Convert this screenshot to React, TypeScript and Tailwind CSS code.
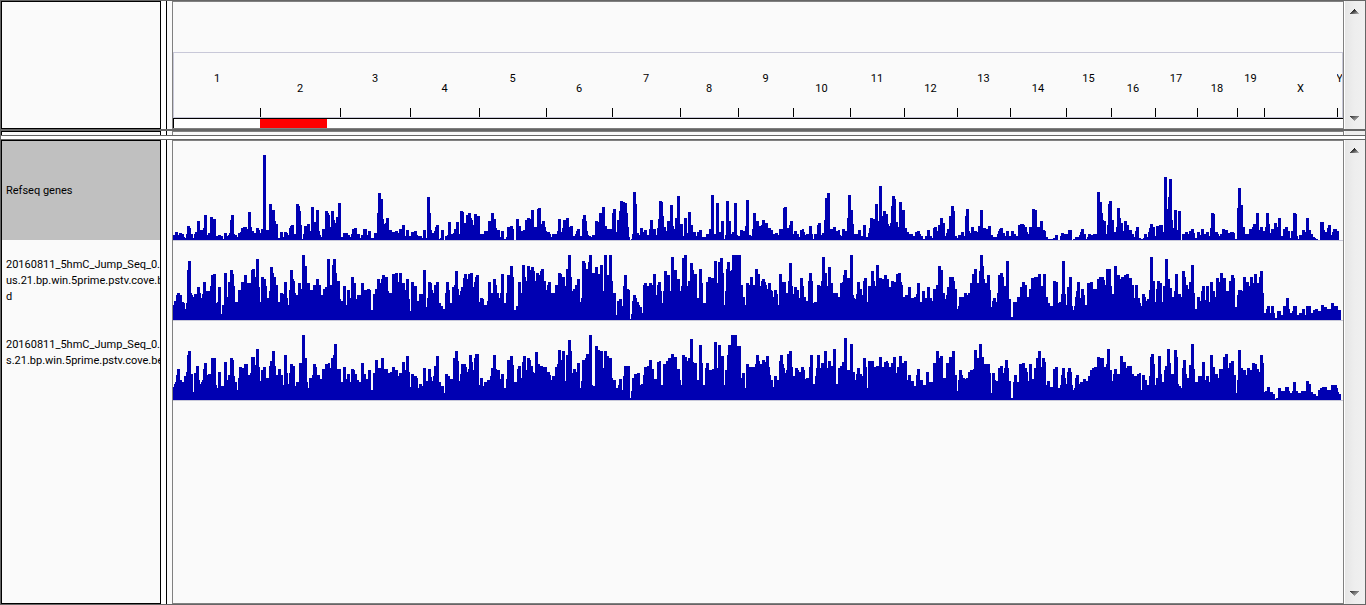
import React from "react";

const REFSEQ = `0:5 2:8 5:5 6:7 9:6 11:3 12:2 13:6 14:14 17:12 18:6 20:2 21:6 22:8 24:19 27:10 30:12 31:25 34:5 35:7 37:23 40:21 43:4 45:5 48:4 50:1 51:7 54:4 55:5 56:7 57:20 58:25 61:6 62:5 64:3 65:7 67:8 68:12 70:13 74:11 75:28 78:13 79:9 81:7 83:12 86:10 87:7 88:11 90:85 93:10 96:36 99:30 102:19 103:16 105:2 107:8 110:3 111:8 114:7 115:5 116:12 117:14 118:15 121:6 123:36 126:34 127:29 128:15 129:1 130:6 131:14 134:16 137:9 138:33 141:18 143:30 146:9 147:5 148:3 149:11 152:29 155:27 156:25 157:13 158:29 161:20 162:17 163:23 165:37 168:3 170:7 175:5 177:3 178:6 179:11 181:12 184:6 187:2 188:5 190:11 194:5 195:9 198:2 201:7 204:27 205:47 208:41 210:21 211:16 212:17 213:22 216:10 219:8 222:9 225:7 226:11 229:15 232:4 233:10 236:4 238:8 241:9 244:5 245:4 249:2 250:10 253:2 254:43 257:27 258:10 259:7 261:9 262:13 263:15 266:1 267:2 268:10 271:0 272:4 274:5 275:18 278:6 280:7 281:11 283:18 286:6 287:29 290:28 291:17 293:25 295:27 298:22 299:20 300:15 301:26 304:24 307:6 311:9 315:19 318:27 321:21 323:12 324:10 327:3 328:9 331:1 333:3 334:13 337:14 340:11 341:0 343:21 346:14 348:9 350:10 352:20 354:22 357:21 358:30 361:13 364:31 365:32 368:16 369:19 372:13 373:9 374:8 377:6 378:3 379:6 384:9 385:21 388:8 389:12 390:20 393:22 396:13 397:14 400:4 402:6 403:9 404:11 407:4 409:21 410:25 413:19 414:9 415:5 416:4 418:3 419:5 422:19 425:18 426:27 429:33 432:14 434:11 439:27 440:31 443:8 444:20 446:29 447:39 450:38 452:37 454:27 455:13 456:3 457:0 458:1 459:6 460:48 463:36 464:7 466:5 467:12 470:8 471:10 474:5 476:11 477:20 480:11 483:5 484:12 485:21 486:39 489:38 490:24 491:13 493:9 494:19 497:35 500:14 501:11 502:22 504:44 507:16 510:4 511:22 514:7 515:28 518:15 520:8 523:4 524:8 526:10 529:3 533:6 536:11 538:45 541:6 543:37 546:8 548:19 551:1 552:5 553:39 556:19 558:6 559:8 561:37 564:5 565:4 567:10 570:9 572:14 573:40 576:5 578:4 579:11 580:27 583:19 586:14 588:15 589:20 592:17 595:12 598:10 600:6 602:7 605:5 606:11 610:32 611:33 614:12 616:15 617:19 620:6 621:9 624:6 626:3 627:10 629:11 631:8 632:5 633:6 636:14 639:6 640:1 641:6 644:15 645:17 648:5 649:7 651:20 652:42 654:47 657:11 660:13 663:9 665:10 667:5 668:4 669:11 672:9 674:22 675:45 678:30 680:16 681:6 685:10 688:4 690:15 693:3 695:7 696:12 697:22 700:21 702:36 705:19 706:54 709:24 710:29 713:26 715:16 716:14 717:17 718:34 719:44 722:41 723:18 725:13 726:38 729:30 732:12 734:8 736:6 740:4 742:8 744:9 747:6 748:4 750:1 752:4 754:10 757:4 759:2 760:12 761:13 764:9 765:15 767:22 770:17 772:4 773:7 774:11 776:24 778:34 781:29 782:4 784:2 785:5 788:8 791:4 792:24 793:31 796:9 797:7 798:13 801:9 804:8 805:14 807:30 810:12 813:11 815:14 818:5 820:3 824:6 825:9 826:11 827:12 830:7 832:4 833:9 836:4 838:9 841:6 843:4 845:15 847:16 851:15 852:13 854:8 855:6 856:13 859:31 862:30 864:13 867:19 870:10 872:9 873:3 875:1 880:2 882:5 885:0 887:4 888:7 891:6 895:10 899:0 900:1 902:3 906:5 907:8 908:11 911:6 913:1 914:3 915:6 918:5 920:6 924:48 927:38 929:27 930:20 931:19 933:6 934:15 935:36 936:39 939:20 941:8 943:13 944:32 947:22 948:17 950:9 951:19 954:15 956:10 959:6 961:3 962:9 963:13 966:2 968:1 970:2 971:6 974:3 975:8 976:12 977:16 980:13 982:4 983:14 986:15 990:8 991:63 994:31 995:43 996:61 999:20 1000:12 1001:30 1004:10 1005:29 1008:0 1009:6 1012:8 1015:6 1016:9 1018:11 1021:7 1022:2 1024:8 1027:5 1028:11 1031:6 1033:8 1036:4 1037:12 1038:27 1041:26 1042:8 1045:6 1046:4 1047:6 1049:11 1052:10 1055:7 1057:8 1061:7 1062:1 1064:32 1065:52 1068:35 1070:13 1072:6 1076:11 1079:13 1080:16 1083:27 1086:10 1087:13 1090:9 1092:13 1093:27 1096:16 1097:7 1098:11 1101:17 1104:13 1105:22 1108:4 1110:11 1112:13 1115:9 1117:2 1118:9 1120:27 1123:26 1124:4 1125:1 1126:5 1129:10 1132:8 1133:22 1136:10 1138:6 1140:3 1142:2 1143:1 1145:0 1147:18 1151:10 1152:8 1154:12 1155:15 1158:5 1159:8 1160:11 1164:9 1166:0`;

const JUMP_A = `0:15 1:19 3:25 4:27 7:25 9:18 11:17 12:11 13:17 14:50 15:59 18:27 19:25 20:23 21:26 24:33 27:27 28:22 29:26 30:38 33:29 37:34 38:45 40:46 43:17 44:18 45:33 48:6 49:15 51:47 54:23 55:38 57:50 60:46 61:34 62:18 65:30 68:38 71:45 74:37 78:50 79:51 82:43 83:61 86:33 87:18 88:43 91:41 93:34 94:22 96:29 97:53 100:47 101:43 103:35 105:18 107:27 110:26 111:38 114:22 115:15 116:30 117:50 120:41 121:39 122:27 123:25 125:37 128:31 129:65 132:54 134:37 137:30 140:35 143:41 146:35 148:25 150:31 152:33 154:61 157:35 159:55 160:61 163:47 164:39 167:21 168:19 170:34 173:15 174:30 177:22 178:43 181:37 183:21 184:25 188:37 191:30 194:31 197:30 198:10 200:26 202:31 204:41 207:37 208:41 209:45 212:43 215:29 216:27 219:46 222:47 225:38 226:47 229:37 232:30 233:41 236:21 237:9 238:38 241:34 244:19 246:26 250:50 253:13 254:22 255:38 258:37 259:30 260:27 261:35 263:38 266:17 268:14 270:11 272:27 273:38 276:30 277:17 279:33 281:35 282:49 285:31 286:25 287:29 288:33 290:42 291:46 294:41 295:46 297:47 300:33 301:38 302:43 303:45 306:18 307:22 310:21 311:15 314:19 315:38 318:27 320:41 323:35 324:27 326:22 327:27 328:46 331:17 333:27 334:45 337:54 340:43 341:10 343:14 345:38 348:27 349:55 352:43 353:39 354:54 357:50 358:53 361:49 362:39 363:47 366:45 367:49 368:51 371:39 373:30 374:35 375:38 378:27 382:35 385:47 388:46 389:43 392:34 393:51 395:65 398:43 399:29 400:31 402:35 404:41 407:18 408:22 409:59 412:57 413:51 415:58 416:65 419:47 422:53 425:46 427:55 430:29 431:65 434:45 436:65 439:39 440:27 443:5 444:19 446:21 449:14 450:34 451:45 454:31 456:30 457:1 458:6 459:19 460:25 463:22 464:18 466:15 467:13 469:7 470:35 471:37 474:34 476:37 479:35 480:46 483:25 484:35 485:38 488:29 489:17 490:29 491:49 494:45 497:29 498:63 501:50 504:41 507:29 508:34 509:62 511:65 514:34 515:39 517:57 520:50 521:46 524:22 526:51 529:37 530:17 533:38 535:43 538:42 541:59 544:37 545:58 547:62 550:47 551:15 552:29 553:51 554:58 557:49 558:50 559:65 568:35 570:23 572:15 573:37 576:35 577:43 580:35 582:51 585:46 587:34 588:39 589:41 592:38 593:35 594:31 595:37 598:30 599:29 600:23 601:30 604:26 605:15 606:46 609:38 613:27 615:39 616:57 619:34 620:26 621:33 624:30 626:22 627:42 630:34 631:23 633:19 635:39 636:47 639:39 640:17 641:18 644:35 647:34 648:39 649:63 652:47 654:34 655:53 658:37 660:27 665:23 667:37 669:38 670:45 671:50 674:42 677:65 680:25 681:22 682:21 683:26 684:38 687:31 689:25 690:39 691:42 694:18 695:34 698:49 701:39 702:34 703:55 706:42 709:41 711:45 714:41 716:33 718:39 721:38 723:46 725:47 728:38 729:35 730:23 732:25 735:33 738:22 741:23 743:26 744:37 747:18 749:29 752:22 754:33 757:22 759:19 760:31 763:35 765:54 768:50 770:27 772:21 773:25 774:33 776:43 781:39 782:31 784:11 785:14 786:23 791:27 794:25 795:27 797:37 799:46 801:51 804:37 806:49 807:65 810:54 811:41 812:37 814:45 817:30 818:13 819:19 820:22 823:18 824:27 825:45 827:47 830:43 831:34 833:59 836:21 838:3 840:18 844:23 847:33 849:38 852:35 854:23 856:31 858:42 861:43 865:46 868:34 870:46 873:23 875:17 877:14 880:39 883:38 885:17 886:18 888:26 889:59 892:26 893:15 894:33 896:43 899:14 900:10 901:14 902:23 903:29 904:38 907:22 908:31 911:25 912:15 914:37 917:38 920:31 924:41 926:43 931:40 932:35 933:51 938:34 939:26 941:54 944:45 947:41 948:43 951:45 953:46 956:42 959:35 961:22 962:35 965:22 967:17 968:14 969:26 972:23 973:19 974:21 976:30 977:63 980:39 982:18 983:31 984:39 987:37 989:18 990:34 992:61 995:41 997:32 999:23 1001:29 1002:46 1005:26 1008:23 1009:49 1012:43 1013:35 1015:31 1016:38 1018:55 1021:27 1022:11 1024:23 1027:19 1028:29 1029:34 1032:20 1033:34 1036:18 1037:38 1040:29 1042:23 1043:42 1046:38 1047:47 1050:42 1053:29 1056:39 1058:45 1061:42 1062:13 1064:25 1065:30 1069:29 1070:43 1073:38 1076:34 1077:43 1080:37 1081:46 1084:37 1086:43 1087:49 1090:27 1091:7 1093:11 1094:14 1097:7 1098:14 1101:7 1102:2 1104:9 1108:5 1110:14 1113:22 1116:11 1117:7 1119:9 1120:14 1124:5 1126:7 1129:11 1132:5 1133:14 1138:7 1140:10 1142:11 1145:9 1148:15 1151:13 1154:11 1158:17 1161:14 1165:10 1168:0`;

const JUMP_B = `0:13 1:16 2:18 3:25 4:31 7:20 9:18 11:24 13:28 14:45 15:49 18:26 20:8 21:27 23:34 26:20 27:16 28:18 29:20 30:31 31:37 34:25 35:26 38:42 43:15 44:12 45:28 48:14 51:38 54:20 55:25 57:42 60:40 61:24 62:18 64:10 65:22 66:33 69:32 71:36 75:25 77:27 78:43 82:35 83:51 86:33 87:19 88:30 90:33 93:22 96:34 97:39 99:49 102:34 103:25 105:31 108:25 110:15 111:45 114:27 115:16 116:27 117:36 120:34 122:14 123:18 126:37 129:65 132:42 134:18 135:12 136:22 139:25 140:36 143:33 144:25 147:21 149:31 152:36 155:37 157:32 158:42 160:45 161:56 164:31 168:18 170:33 173:21 174:26 177:18 178:31 181:30 182:26 184:20 186:18 188:37 191:26 193:21 195:30 198:10 200:27 202:40 205:32 208:42 211:31 215:27 217:28 219:33 222:30 225:24 226:27 229:38 232:30 233:44 236:28 237:13 238:26 241:24 244:22 245:12 246:16 249:14 250:32 253:19 255:31 258:23 259:19 260:24 261:34 263:44 266:18 268:14 271:7 272:26 275:24 277:21 280:42 282:49 285:39 286:19 287:26 288:36 293:33 294:28 295:31 296:45 299:38 300:30 301:42 302:46 306:15 307:22 310:14 311:18 314:20 317:24 318:32 320:45 323:31 324:30 327:21 328:26 331:12 333:21 334:40 337:44 340:35 341:18 344:31 345:34 348:22 349:38 350:44 353:30 354:42 357:40 358:34 360:28 361:27 362:48 365:36 367:34 370:33 374:28 377:25 378:20 379:24 382:33 384:36 385:50 388:40 389:49 392:19 393:45 395:60 398:49 399:27 400:31 403:28 404:37 407:12 408:19 409:40 412:42 413:46 416:65 419:15 420:14 422:54 425:50 427:49 430:32 431:49 434:44 436:42 439:22 440:20 443:12 445:15 446:21 449:10 450:24 451:34 457:2 458:9 459:22 461:26 464:27 467:15 468:16 470:25 471:33 474:34 476:40 479:31 481:21 484:38 486:39 488:15 490:36 493:39 495:42 498:46 501:43 504:31 507:20 508:15 509:45 512:43 514:39 515:42 517:61 520:38 521:37 524:20 526:55 529:37 530:15 532:32 533:37 536:30 539:31 541:58 544:32 545:55 548:44 551:15 552:30 554:45 555:55 558:65 564:54 568:22 569:27 572:12 573:36 576:33 582:36 583:45 586:39 587:36 589:40 592:38 593:44 596:33 597:25 598:20 600:13 601:24 604:20 606:39 607:45 610:36 611:32 612:27 613:30 614:46 616:49 619:33 620:24 622:32 625:30 626:28 628:33 631:30 632:21 633:22 636:33 637:45 640:16 642:24 643:32 644:45 647:32 648:37 651:49 654:32 655:39 658:34 660:51 663:16 665:32 667:34 669:38 671:62 674:30 677:56 680:28 682:20 683:26 684:32 687:26 689:24 690:42 693:33 694:12 695:39 701:33 703:34 706:43 709:33 711:38 713:39 715:37 716:33 718:37 720:43 723:27 724:33 726:44 729:37 731:39 734:20 735:25 738:19 741:14 743:25 744:31 747:20 750:15 753:28 756:18 760:37 763:49 766:42 767:44 770:22 773:37 776:43 779:49 782:25 784:9 785:20 786:30 789:25 790:22 792:21 793:22 795:28 797:30 800:31 801:50 804:42 806:56 809:43 811:36 817:27 818:7 819:27 822:20 823:19 825:32 827:34 830:27 831:32 832:40 835:32 836:19 838:2 840:18 841:25 844:18 846:36 849:37 852:32 854:28 855:19 856:36 859:21 861:32 863:42 865:49 868:33 869:42 872:38 873:15 874:19 877:13 880:31 882:33 885:12 887:15 888:25 889:32 892:22 893:16 894:28 895:32 898:28 899:15 900:10 901:12 902:22 903:25 906:16 907:18 910:21 913:19 915:24 917:30 919:32 921:33 924:43 927:42 931:33 933:36 934:51 937:30 939:19 940:26 941:31 944:26 947:44 950:38 953:32 954:34 959:26 961:24 964:26 966:27 968:10 969:25 972:20 974:15 976:24 977:43 978:46 981:36 982:15 983:22 985:44 988:26 989:18 991:30 992:34 994:51 997:37 998:26 1001:50 1004:43 1005:16 1006:14 1008:12 1009:32 1010:40 1013:26 1014:22 1016:35 1018:56 1021:31 1022:18 1025:24 1029:38 1032:20 1033:24 1036:18 1037:45 1040:33 1042:26 1045:22 1046:31 1050:43 1052:46 1055:32 1056:37 1058:39 1061:25 1063:7 1064:20 1065:50 1068:32 1070:30 1073:25 1074:32 1077:30 1079:37 1082:36 1084:31 1086:28 1087:45 1090:37 1091:8 1092:9 1094:13 1097:8 1100:6 1102:1 1103:2 1105:12 1108:9 1112:13 1116:9 1117:7 1119:9 1120:18 1123:9 1125:7 1128:9 1133:19 1136:16 1138:8 1140:6 1143:4 1145:10 1147:12 1149:13 1154:10 1158:15 1164:12 1165:8 1166:6 1168:0`;

const CHROMOSOMES: [string, number][] = [
  ["1", 86], ["2", 80], ["3", 70], ["4", 69], ["5", 67], ["6", 66], ["7", 68],
  ["8", 58], ["9", 55], ["10", 57], ["11", 54], ["12", 53], ["13", 53],
  ["14", 56], ["15", 45], ["16", 44], ["17", 42], ["18", 40], ["19", 27],
  ["X", 73], ["Y", 5],
];

/** Turns "x:height" steps into a filled step outline standing on the baseline. */
function stepPath(data: string, height: number) {
  const steps = data.split(" ").map((s) => s.split(":").map(Number));
  let d = `M0 ${height}`;
  for (const [x, h] of steps) d += `H${x}V${height - h}`;
  return d + `V${height}Z`;
}

function Coverage({ data, height, name }: { data: string; height: number; name: string }) {
  return (
    <div className="border-b border-[#c8c8d8]">
      <svg
        role="img"
        aria-label={name}
        viewBox={`0 0 1170 ${height}`}
        preserveAspectRatio="none"
        shapeRendering="crispEdges"
        className={height > 90 ? "block h-[99px] w-full" : "block h-[79px] w-full"}
      >
        <path d={stepPath(data, height)} fill="#0000b2" />
      </svg>
    </div>
  );
}

function ScrollBar({ id }: { id: string }) {
  return (
    <div className="ml-px flex w-5 shrink-0 flex-col justify-between bg-linear-to-r from-[#e6e6e6] via-[#eeeeee] to-[#f0f0f0]">
      <button type="button" aria-label="Scroll up" className="flex h-5 items-center justify-center pr-px">
        <svg width="9" height="5" viewBox="0 0 9 5" shapeRendering="crispEdges">
          <defs>
            <linearGradient id={`${id}-up`} x1="0" y1="0" x2="1" y2="1">
              <stop offset="0.3" stopColor="#1c1c1c" />
              <stop offset="1" stopColor="#c4c4c4" />
            </linearGradient>
          </defs>
          <path d="M4 0H5V1H6V2H7V3H8V4H9V5H0V4H1V3H2V2H3V1H4Z" fill={`url(#${id}-up)`} />
        </svg>
      </button>
      <button type="button" aria-label="Scroll down" className="flex h-[22px] items-center justify-center pr-px">
        <svg width="9" height="5" viewBox="0 0 9 5" shapeRendering="crispEdges">
          <defs>
            <linearGradient id={`${id}-down`} x1="0" y1="0" x2="1" y2="1">
              <stop offset="0" stopColor="#2c2c2c" />
              <stop offset="0.9" stopColor="#c4c4c4" />
            </linearGradient>
          </defs>
          <path d="M0 0H9V1H8V2H7V3H6V4H5V5H4V4H3V3H2V2H1V1H0Z" fill={`url(#${id}-down)`} />
        </svg>
      </button>
    </div>
  );
}

function Gutter() {
  return (
    <div className="flex w-[11px] shrink-0">
      <div className="w-[5px] bg-white" />
      <div className="w-px bg-black" />
      <div className="flex-1 bg-[#fafafa]" />
    </div>
  );
}

function Ruler() {
  return (
    <div className="flex h-[66px] overflow-hidden border border-[#c8c8d8]">
      {CHROMOSOMES.map(([name, size], i) => (
        <div key={name} className="flex min-w-0 basis-0 flex-col overflow-hidden" style={{ flexGrow: size }}>
          <div className={i % 2 ? "flex justify-center pt-7" : "flex justify-center pt-[18px]"}>
            <span>{name}</span>
          </div>
          {i > 0 && <div className="mt-auto h-[9px] w-px bg-black" />}
        </div>
      ))}
    </div>
  );
}

export default function App() {
  return (
    <div
      className="flex h-screen flex-col overflow-hidden border border-[#666666] bg-white text-[11px] leading-4 text-black"
      style={{ fontFamily: 'Roboto, "DejaVu Sans", sans-serif' }}
    >
      <header className="flex h-32 shrink-0">
        <div className="w-40 shrink-0 border border-black bg-[#fafafa]" />
        <Gutter />
        <div className="flex min-w-0 flex-1 flex-col border border-[#808080] bg-[#fafafa]">
          <div className="flex-1" />
          <Ruler />
          <div className="flex h-[10px] border-t border-l border-black bg-white">
            <div className="basis-0 grow-[86]" />
            <div className="basis-0 grow-[67] bg-[#ff0000]" />
            <div className="basis-0 grow-[1016]" />
          </div>
        </div>
        <ScrollBar id="header" />
      </header>

      <div className="h-[2px] shrink-0 bg-[#666666]" />
      <div className="flex h-1 shrink-0">
        <div className="w-40 shrink-0 border-x border-t border-black bg-[#fafafa]" />
        <Gutter />
        <div className="flex-1 border-x border-t border-[#808080] bg-[#fafafa]" />
        <div className="ml-px w-5 bg-[#eeeeee]" />
      </div>
      <div className="h-[5px] shrink-0 border-y border-[#666666] bg-white" />

      <main className="flex min-h-0 flex-1">
        <div className="w-40 shrink-0 overflow-hidden border border-black bg-[#fafafa] whitespace-nowrap">
          <div className="mb-px flex h-[99px] items-center bg-[#c0c0c0] pl-1">Refseq genes</div>
          <div className="h-20 pt-4 pl-1">
            20160811_5hmC_Jump_Seq_0.
            <br />
            us.21.bp.win.5prime.pstv.cove.be
            <br />d
          </div>
          <div className="h-20 pt-4 pl-1">
            20160811_5hmC_Jump_Seq_0.
            <br />
            s.21.bp.win.5prime.pstv.cove.bed
          </div>
        </div>
        <Gutter />
        <div className="min-w-0 flex-1 border border-[#808080] bg-[#fafafa]">
          <Coverage data={REFSEQ} height={99} name="Refseq genes" />
          <Coverage data={JUMP_A} height={79} name="5hmC Jump Seq, first sample" />
          <Coverage data={JUMP_B} height={79} name="5hmC Jump Seq, second sample" />
        </div>
        <ScrollBar id="tracks" />
      </main>
    </div>
  );
}
